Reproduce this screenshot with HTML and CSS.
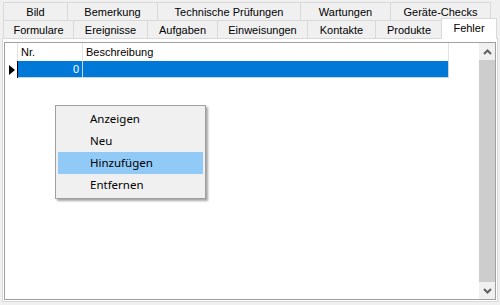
FILE: index.html
```html
<!DOCTYPE html>
<html lang="de">
<head>
    <meta charset="UTF-8">
    <title>Fehler</title>
    <link rel="stylesheet" href="styles.css">
</head>
<body>
    <div class="window">
        <!-- Tab rows -->
        <div class="tabs">
            <div class="tab-row">
                <div class="tab w-bild">Bild</div>
                <div class="tab w-bemerkung">Bemerkung</div>
                <div class="tab w-technik">Technische Prüfungen</div>
                <div class="tab w-wartungen">Wartungen</div>
                <div class="tab w-checks">Geräte-Checks</div>
            </div>
            <div class="tab-row">
                <div class="tab w-formulare">Formulare</div>
                <div class="tab w-ereignisse">Ereignisse</div>
                <div class="tab w-aufgaben">Aufgaben</div>
                <div class="tab w-einweisungen">Einweisungen</div>
                <div class="tab w-kontakte">Kontakte</div>
                <div class="tab w-produkte">Produkte</div>
                <div class="tab active w-fehler">Fehler</div>
            </div>
        </div>

        <!-- Tab page -->
        <div class="panel">
            <div class="grid">
                <div class="grid-body">
                    <div class="grid-head">
                        <div class="row-header"></div>
                        <div class="col col-nr">Nr.</div>
                        <div class="col col-desc">Beschreibung</div>
                    </div>
                    <div class="grid-row current">
                        <div class="row-header">
                            <svg width="6" height="10" viewBox="0 0 6 10"><polygon points="0,0 6,5 0,10" fill="#000"/></svg>
                        </div>
                        <div class="cell col-nr num">0</div>
                        <div class="cell col-desc"></div>
                    </div>
                </div>
                <div class="scrollbar">
                    <div class="sb-btn">
                        <svg width="9" height="6" viewBox="0 0 9 6"><polyline points="1,5 4.5,1.5 8,5" fill="none" stroke="#606060" stroke-width="2"/></svg>
                    </div>
                    <div class="sb-thumb"></div>
                    <div class="sb-btn">
                        <svg width="9" height="6" viewBox="0 0 9 6"><polyline points="1,1 4.5,4.5 8,1" fill="none" stroke="#606060" stroke-width="2"/></svg>
                    </div>
                </div>
            </div>
        </div>

        <!-- Context menu -->
        <div class="context-menu">
            <div class="menu-item">Anzeigen</div>
            <div class="menu-item">Neu</div>
            <div class="menu-item hover">Hinzufügen</div>
            <div class="menu-item">Entfernen</div>
        </div>
    </div>
</body>
</html>
```

FILE: styles.css
```css
* {
    margin: 0;
    padding: 0;
    box-sizing: border-box;
}
body {
    font-family: 'Liberation Sans', Arial, sans-serif;
    font-size: 11px;
    background: #f0f0f0;
    color: #000;
    width: 500px;
    height: 305px;
    overflow: hidden;
}
.window {
    position: relative;
    width: 500px;
    height: 305px;
    padding-top: 2px;
}

/* Tabs */
.tabs {
    padding-left: 3px;
}
.tab-row {
    display: flex;
    height: 18px;
    align-items: flex-end;
}
.tab {
    height: 18px;
    border: 1px solid #d9d9d9;
    border-bottom: none;
    margin-right: -1px;
    background: #f0f0f0;
    display: flex;
    align-items: center;
    justify-content: center;
    white-space: nowrap;
}
.tab.active {
    position: relative;
    z-index: 2;
    height: 21px;
    margin-bottom: -1px;
    margin-left: -1px;
    background: #fff;
    align-items: flex-start;
    padding-top: 3px;
    border-color: #d9d9d9;
}
.w-bild { width: 65px; }
.w-bemerkung { width: 91px; }
.w-technik { width: 144px; }
.w-wartungen { width: 91px; }
.w-checks { width: 101px; }
.w-formulare { width: 71px; }
.w-ereignisse { width: 75px; }
.w-aufgaben { width: 71px; }
.w-einweisungen { width: 91px; }
.w-kontakte { width: 69px; }
.w-produkte { width: 68px; }
.w-fehler { width: 56px; }

/* Panel */
.panel {
    position: relative;
    z-index: 1;
    margin-left: 2px;
    width: 496px;
    height: 264px;
    background: #fff;
    border: 1px solid #d9d9d9;
    padding: 3px 1px 1px 1px;
}
.grid {
    display: flex;
    height: 100%;
    border: 1px solid #a0a0a0;
    background: #fff;
}
.grid-body {
    flex: 1;
}
.grid-head,
.grid-row {
    display: flex;
    height: 18px;
}
.grid-row {
    height: 17px;
}
.row-header {
    width: 13px;
    border-right: 1px solid #e3e3e3;
    display: flex;
    align-items: center;
    padding-left: 4px;
}
.col, .cell {
    border-right: 1px solid #e3e3e3;
    padding: 0 3px;
    display: flex;
    align-items: center;
    white-space: nowrap;
}
.col-nr { width: 65px; }
.col-desc { width: 366px; }
.grid-row.current .row-header {
    border-right: 1px solid #000;
}
.grid-row.current .cell {
    background: #0078d7;
    color: #fff;
    border-bottom: 1px solid #c9d6e3;
    border-right-color: #c9d6e3;
}
.num {
    justify-content: flex-end;
}

/* Scrollbar */
.scrollbar {
    width: 16px;
    display: flex;
    flex-direction: column;
    background: #f0f0f0;
}
.sb-btn {
    height: 17px;
    display: flex;
    align-items: center;
    justify-content: center;
}
.sb-thumb {
    flex: 1;
    background: #cdcdcd;
}

/* Context menu */
.context-menu {
    position: absolute;
    left: 55px;
    top: 105px;
    width: 151px;
    padding: 2px;
    background: #f0f0f0;
    border: 1px solid #a0a0a0;
    box-shadow: 2px 2px 2px rgba(0, 0, 0, 0.35);
    z-index: 10;
    font-family: 'Noto Sans', 'Open Sans', sans-serif;
    font-size: 11.5px;
}
.menu-item {
    height: 22px;
    line-height: 22px;
    padding-left: 32px;
}
.menu-item.hover {
    background: #91c9f7;
}
```
